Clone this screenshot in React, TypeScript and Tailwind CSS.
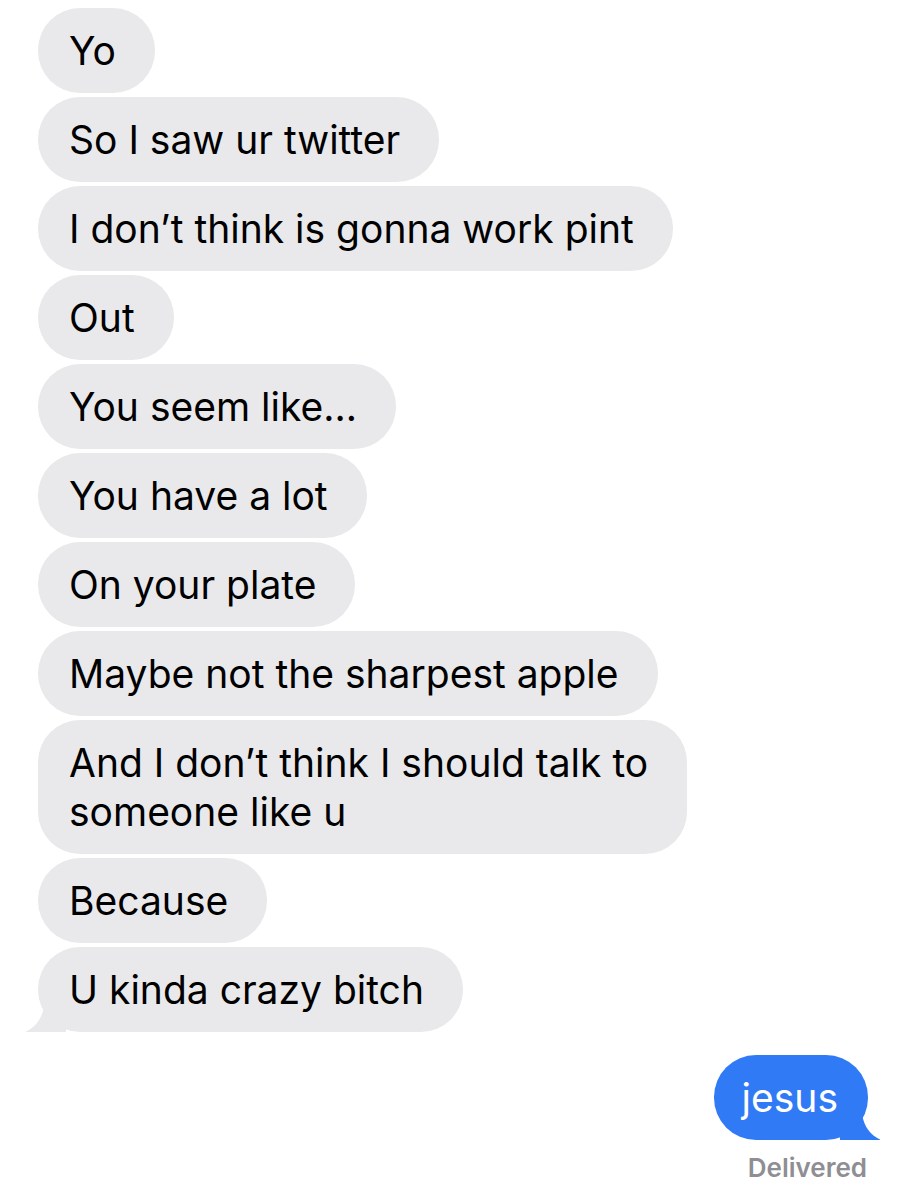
import React from "react"

const incoming: React.ReactNode[] = [
    "Yo",
    "So I saw ur twitter",
    "I don’t think is gonna work pint",
    "Out",
    "You seem like...",
    "You have a lot",
    "On your plate",
    "Maybe not the sharpest apple",
    <>
        And I don’t think I should talk to
        <br />
        someone like u
    </>,
    "Because",
]

const Bubble = ({ children }: { children: React.ReactNode }) => (
    <div className="w-max rounded-[42px] bg-[#e9e9eb] py-[18px] pr-[39px] pl-[31px] text-[39px] leading-[49px] text-black">
        {children}
    </div>
)

export default function App() {
    return (
        <div className="h-[1200px] w-[907px] bg-white font-['Inter',sans-serif]">
            <div className="flex flex-col gap-[4px] pt-[8px] pl-[38px]">
                {incoming.map((text, i) => (
                    <Bubble key={i}>{text}</Bubble>
                ))}

                <div className="relative w-max">
                    <svg className="absolute bottom-0 -left-[12px]" width="40" height="40" viewBox="0 0 40 40">
                        <path d="M40 0 L40 40 L-1 40 C8 36 16 28 18 14 L18 0 Z" fill="#e9e9eb" />
                    </svg>
                    <div className="relative">
                        <Bubble>U kinda crazy bitch</Bubble>
                    </div>
                </div>
            </div>

            <div className="mt-[23px] flex flex-col items-end pr-[39px]">
                <div className="relative">
                    <svg className="absolute right-[-12px] bottom-0" width="40" height="40" viewBox="0 0 40 40">
                        <path d="M0 0 L0 40 L41 40 C32 36 24 28 22 14 L22 0 Z" fill="#317af6" />
                    </svg>
                    <div className="relative rounded-[42px] bg-[#317af6] py-[18px] pr-[30px] pl-[28px] text-[39px] leading-[49px] text-white">
                        jesus
                    </div>
                </div>
                <div className="mt-[12px] pr-[1px] text-[26px] font-semibold leading-[32px] text-[#8e8e93]">Delivered</div>
            </div>
        </div>
    )
}
